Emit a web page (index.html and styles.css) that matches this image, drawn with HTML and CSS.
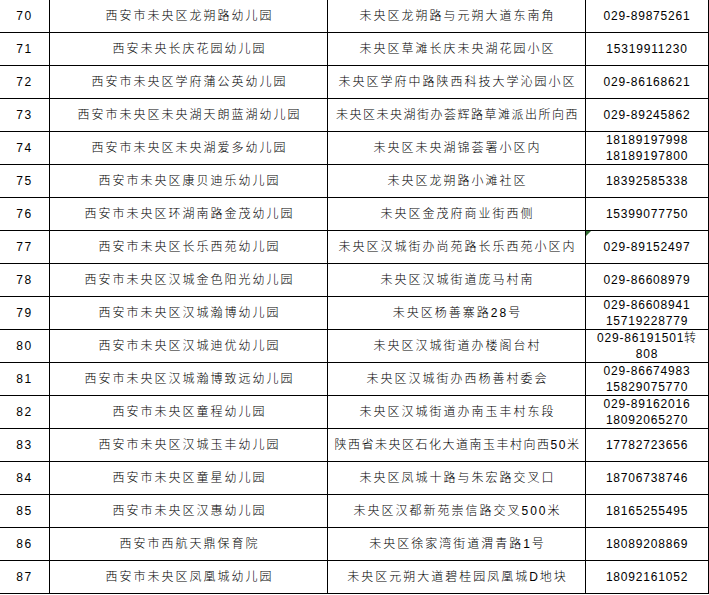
FILE: index.html
```html
<!DOCTYPE html>
<html lang="zh">
<head>
<meta charset="utf-8">
<link rel="stylesheet" href="styles.css">
</head>
<body>
<table class="grid">
<colgroup><col class="c-no"><col class="c-name"><col class="c-addr"><col class="c-tel"></colgroup>
<tbody>
<tr><td class="no">70</td><td class="cn">西安市未央区龙朔路幼儿园</td><td class="cn">未央区龙朔路与元朔大道东南角</td><td class="tel">029-89875261</td></tr>
<tr><td class="no">71</td><td class="cn">西安未央长庆花园幼儿园</td><td class="cn">未央区草滩长庆未央湖花园小区</td><td class="tel">15319911230</td></tr>
<tr><td class="no">72</td><td class="cn">西安市未央区学府蒲公英幼儿园</td><td class="cn">未央区学府中路陕西科技大学沁园小区</td><td class="tel">029-86168621</td></tr>
<tr><td class="no">73</td><td class="cn">西安市未央区未央湖天朗蓝湖幼儿园</td><td class="cn tight">未央区未央湖街办荟辉路草滩派出所向西</td><td class="tel">029-89245862</td></tr>
<tr><td class="no">74</td><td class="cn">西安市未央区未央湖爱多幼儿园</td><td class="cn">未央区未央湖锦荟署小区内</td><td class="tel">18189197998<br>18189197800</td></tr>
<tr><td class="no">75</td><td class="cn">西安市未央区康贝迪乐幼儿园</td><td class="cn">未央区龙朔路小滩社区</td><td class="tel">18392585338</td></tr>
<tr><td class="no">76</td><td class="cn">西安市未央区环湖南路金茂幼儿园</td><td class="cn">未央区金茂府商业街西侧</td><td class="tel">15399077750</td></tr>
<tr><td class="no">77</td><td class="cn">西安市未央区长乐西苑幼儿园</td><td class="cn">未央区汉城街办尚苑路长乐西苑小区内</td><td class="tel flag">029-89152497</td></tr>
<tr><td class="no">78</td><td class="cn">西安市未央区汉城金色阳光幼儿园</td><td class="cn">未央区汉城街道庞马村南</td><td class="tel">029-86608979</td></tr>
<tr><td class="no">79</td><td class="cn">西安市未央区汉城瀚博幼儿园</td><td class="cn">未央区杨善寨路28号</td><td class="tel">029-86608941<br>15719228779</td></tr>
<tr><td class="no">80</td><td class="cn">西安市未央区汉城迪优幼儿园</td><td class="cn">未央区汉城街道办楼阁台村</td><td class="tel">029-86191501转<br>808</td></tr>
<tr><td class="no">81</td><td class="cn">西安市未央区汉城瀚博致远幼儿园</td><td class="cn">未央区汉城街办西杨善村委会</td><td class="tel">029-86674983<br>15829075770</td></tr>
<tr><td class="no">82</td><td class="cn">西安市未央区童程幼儿园</td><td class="cn">未央区汉城街道办南玉丰村东段</td><td class="tel">029-89162016<br>18092065270</td></tr>
<tr><td class="no">83</td><td class="cn">西安市未央区汉城玉丰幼儿园</td><td class="cn tight">陕西省未央区石化大道南玉丰村向西50米</td><td class="tel">17782723656</td></tr>
<tr><td class="no">84</td><td class="cn">西安市未央区童星幼儿园</td><td class="cn">未央区凤城十路与朱宏路交叉口</td><td class="tel">18706738746</td></tr>
<tr><td class="no">85</td><td class="cn">西安市未央区汉惠幼儿园</td><td class="cn">未央区汉都新苑崇信路交叉500米</td><td class="tel">18165255495</td></tr>
<tr><td class="no">86</td><td class="cn">西安市西航天鼎保育院</td><td class="cn">未央区徐家湾街道渭青路1号</td><td class="tel">18089208869</td></tr>
<tr><td class="no">87</td><td class="cn">西安市未央区凤凰城幼儿园</td><td class="cn">未央区元朔大道碧桂园凤凰城D地块</td><td class="tel">18092161052</td></tr>
</tbody>
</table>
</body>
</html>
```
FILE: styles.css
```css
html, body {
  margin: 0;
  padding: 0;
  background: #fff;
  overflow: hidden;
}
.grid {
  border-collapse: collapse;
  table-layout: fixed;
  width: 709px;
  margin: -1px 0 0 -1px;
  color: #000;
  font-family: "Liberation Sans", "Noto Sans CJK SC", sans-serif;
  font-size: 12px;
  font-weight: 300;
  line-height: 16px;
}
.c-no { width: 50px; }
.c-name { width: 278px; }
.c-addr { width: 258px; }
.c-tel { width: 123px; }
.grid tr {
  height: 33px;
}
.grid td {
  border: 1px solid #000;
  padding: 0;
  text-align: center;
  vertical-align: middle;
  white-space: nowrap;
  overflow: hidden;
}
.grid td.cn {
  letter-spacing: 2px;
  text-indent: 2px;
}
.grid td.tight {
  letter-spacing: 1.5px;
}
.grid td.tel {
  letter-spacing: 0.8px;
  position: relative;
}
.grid td.no {
  letter-spacing: 1.5px;
}
.grid td.flag::before {
  content: "";
  position: absolute;
  left: 0;
  top: 0;
  border-top: 5px solid #2f6b2f;
  border-right: 5px solid transparent;
}
```
